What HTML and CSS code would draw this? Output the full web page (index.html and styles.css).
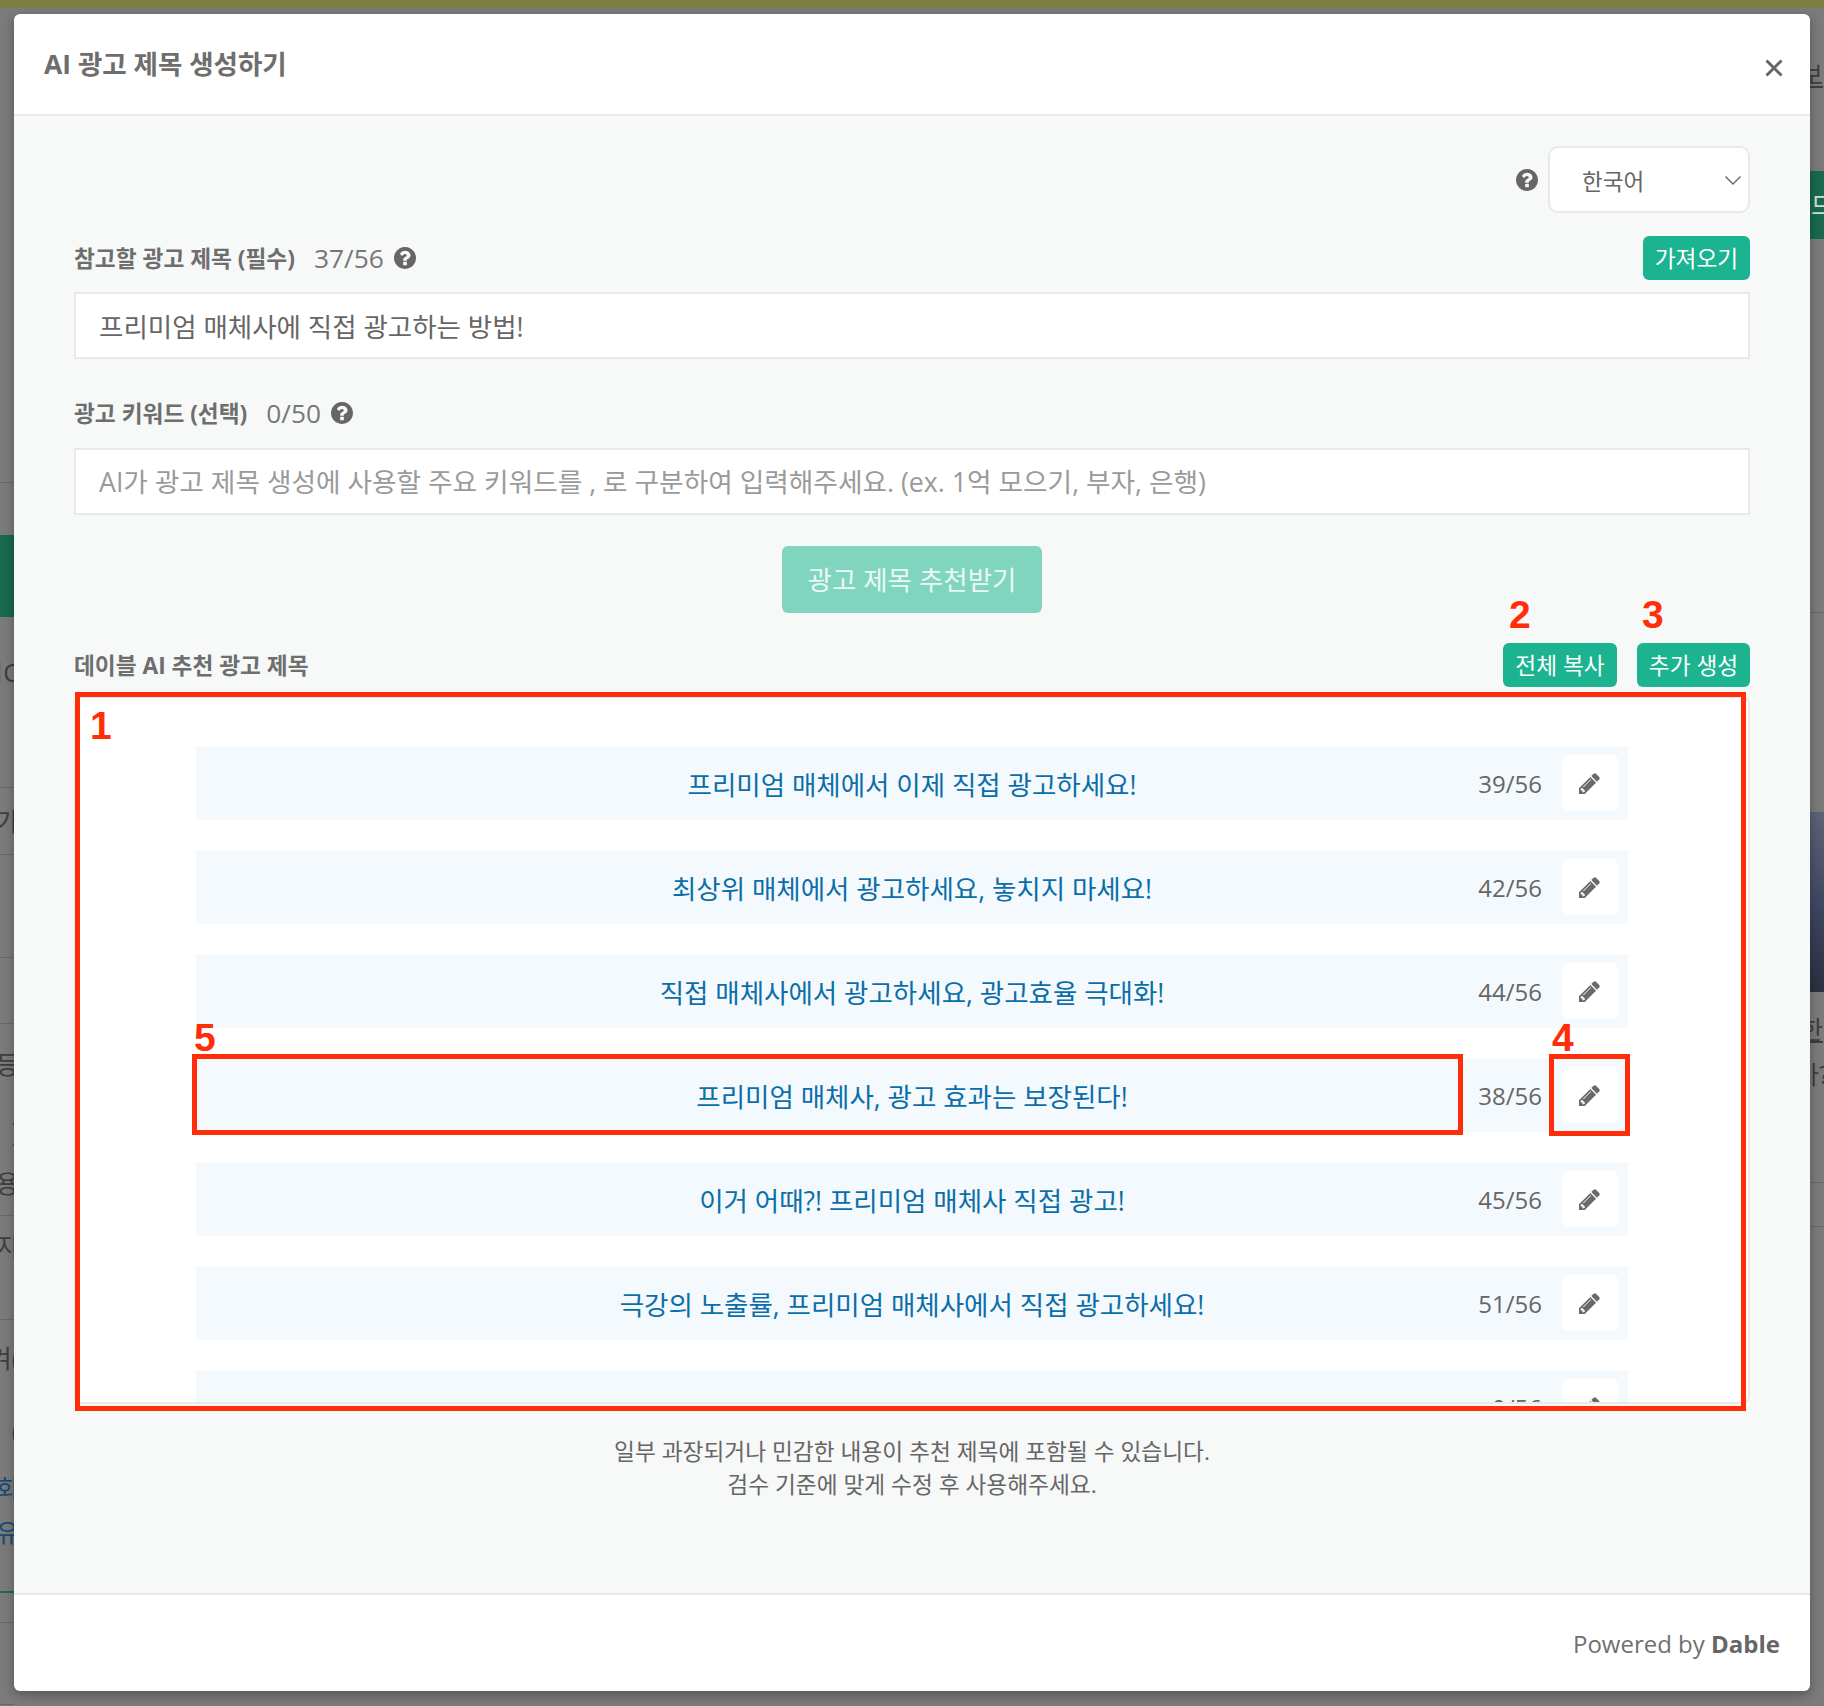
FILE: index.html
```html
<!DOCTYPE html>
<html lang="ko">
<head>
<meta charset="utf-8">
<title>AI 광고 제목 생성하기</title>
<link rel="stylesheet" href="styles.css">
</head>
<body>
<svg class="defs" aria-hidden="true">
  <symbol id="i-help" viewBox="128 128 1536 1536"><path d="M1024 1376v-192q0-14-9-23t-23-9h-192q-14 0-23 9t-9 23v192q0 14 9 23t23 9h192q14 0 23-9t9-23zm256-672q0-88-55.5-163t-138.5-116-170-41q-243 0-371 213-15 24 8 42l132 100q7 6 19 6 16 0 25-12 53-68 86-92 34-24 86-24 48 0 85.5 26t37.5 59q0 38-20 61t-68 45q-63 28-115.5 86.5t-52.5 125.5v36q0 14 9 23t23 9h192q14 0 23-9t9-23q0-19 21.5-49.5t54.5-49.5q32-18 49-28.5t46-35 44.5-48 28-60.5 12.5-81zm384 192q0 209-103 385.5t-279.5 279.5-385.5 103-385.5-103-279.5-279.5-103-385.5 103-385.5 279.5-279.5 385.5-103 385.5 103 279.5 279.5 103 385.5z"/></symbol>
  <symbol id="i-pencil" viewBox="128 128 1536 1536"><path d="M491 1536l91-91-235-235-91 91v107h128v128h107zm523-928q0-22-22-22-10 0-17 7l-542 542q-7 7-7 17 0 22 22 22 10 0 17-7l542-542q7-7 7-17zm-54-192l416 416-832 832h-416v-416zm683 96q0 53-37 90l-166 166-416-416 166-165q36-38 90-38 53 0 91 38l235 234q37 39 37 91z"/></symbol>
</svg>

<div class="topbar"></div>

<div class="behind" aria-hidden="true">
  <div class="strip strip-left">
    <div class="cell ruled"></div>
    <div class="cell"></div>
    <div class="cell green"></div>
    <div class="cell"><span class="frag">이C</span></div>
    <div class="cell ruled"></div>
    <div class="cell"><span class="frag">가</span></div>
    <div class="cell ruled"></div>
    <div class="cell ruled"></div>
    <div class="cell ruled"></div>
    <div class="cell"><span class="frag">등</span></div>
    <div class="cell"><span class="frag">)</span></div>
    <div class="cell"><span class="frag">용</span></div>
    <div class="cell ruled"></div>
    <div class="cell"><span class="frag">지</span></div>
    <div class="cell ruled"></div>
    <div class="cell"><span class="frag">겨(</span></div>
    <div class="cell"><span class="frag">(</span></div>
    <div class="cell"><span class="frag blue">회</span></div>
    <div class="cell"><span class="frag blue">유</span></div>
    <div class="cell greenline"></div>
    <div class="cell ruled"></div>
    <div class="cell ruled"></div>
    <div class="cell"></div>
  </div>
  <div class="strip strip-right">
    <div class="cell"><span class="frag under">보</span></div>
    <div class="cell"></div>
    <div class="cell green"><span class="frag light">므</span></div>
    <div class="cell ruled"></div>
    <div class="cell"></div>
    <div class="cell photo"></div>
    <div class="cell"><span class="frag under">한</span></div>
    <div class="cell"><span class="frag cut">아?</span></div>
    <div class="cell ruled"></div>
    <div class="cell ruled"><span class="frag">‹</span></div>
    <div class="cell"></div>
  </div>
</div>

<main class="modal">
  <header class="modal-head">
    <h1 class="modal-title">AI 광고 제목 생성하기</h1>
    <button class="close" type="button" aria-label="닫기">
      <svg viewBox="0 0 18 18"><path d="M1.5 1.5l15 15M16.5 1.5l-15 15"/></svg>
    </button>
  </header>

  <section class="modal-body">
    <div class="lang-row">
      <svg class="help"><use href="#i-help"/></svg>
      <div class="select">
        <span>한국어</span>
        <svg class="chev" viewBox="0 0 16 9"><path d="M.5.5L8 8 15.5.5"/></svg>
      </div>
    </div>

    <div class="label-row first">
      <div class="label">
        <strong>참고할 광고 제목 (필수)</strong>
        <span class="counter">37/56</span>
        <svg class="help"><use href="#i-help"/></svg>
      </div>
      <button class="btn btn-get" type="button">가져오기</button>
    </div>
    <div class="input">프리미엄 매체사에 직접 광고하는 방법!</div>

    <div class="label-row second">
      <div class="label">
        <strong>광고 키워드 (선택)</strong>
        <span class="counter">0/50</span>
        <svg class="help"><use href="#i-help"/></svg>
      </div>
    </div>
    <div class="input placeholder">AI가 광고 제목 생성에 사용할 주요 키워드를 , 로 구분하여 입력해주세요. (ex. 1억 모으기, 부자, 은행)</div>

    <div class="cta-row">
      <button class="cta" type="button">광고 제목 추천받기</button>
    </div>

    <div class="label-row results">
      <strong class="results-title">데이블 AI 추천 광고 제목</strong>
      <div class="actions">
        <button class="btn btn-copy" type="button">전체 복사</button>
        <button class="btn btn-more" type="button">추가 생성</button>
      </div>
    </div>

    <div class="list">
      <div class="row"><span class="row-text">프리미엄 매체에서 이제 직접 광고하세요!</span><div class="row-side"><span class="row-count">39/56</span><button class="edit" type="button" aria-label="수정"><svg><use href="#i-pencil"/></svg></button></div></div>
      <div class="row"><span class="row-text">최상위 매체에서 광고하세요, 놓치지 마세요!</span><div class="row-side"><span class="row-count">42/56</span><button class="edit" type="button" aria-label="수정"><svg><use href="#i-pencil"/></svg></button></div></div>
      <div class="row"><span class="row-text">직접 매체사에서 광고하세요, 광고효율 극대화!</span><div class="row-side"><span class="row-count">44/56</span><button class="edit" type="button" aria-label="수정"><svg><use href="#i-pencil"/></svg></button></div></div>
      <div class="row"><span class="row-text">프리미엄 매체사, 광고 효과는 보장된다!</span><div class="row-side"><span class="row-count">38/56</span><button class="edit" type="button" aria-label="수정"><svg><use href="#i-pencil"/></svg></button></div></div>
      <div class="row"><span class="row-text">이거 어때?! 프리미엄 매체사 직접 광고!</span><div class="row-side"><span class="row-count">45/56</span><button class="edit" type="button" aria-label="수정"><svg><use href="#i-pencil"/></svg></button></div></div>
      <div class="row"><span class="row-text">극강의 노출률, 프리미엄 매체사에서 직접 광고하세요!</span><div class="row-side"><span class="row-count">51/56</span><button class="edit" type="button" aria-label="수정"><svg><use href="#i-pencil"/></svg></button></div></div>
      <div class="row"><span class="row-text"></span><div class="row-side"><span class="row-count">0/56</span><button class="edit" type="button" aria-label="수정"><svg><use href="#i-pencil"/></svg></button></div></div>
    </div>

    <p class="hint">일부 과장되거나 민감한 내용이 추천 제목에 포함될 수 있습니다.<br>검수 기준에 맞게 수정 후 사용해주세요.</p>
  </section>

  <footer class="modal-foot">Powered by&nbsp;<b>Dable</b></footer>
</main>

<div class="marks" aria-hidden="true">
  <div class="box box-list"></div>
  <div class="box box-title"></div>
  <div class="box box-edit"></div>
  <span class="num num-1">1</span>
  <span class="num num-2">2</span>
  <span class="num num-3">3</span>
  <span class="num num-4">4</span>
  <span class="num num-5">5</span>
</div>
</body>
</html>
```

FILE: styles.css
```css
* { box-sizing: border-box; }
html, body { margin: 0; padding: 0; }
body {
  position: relative;
  width: 1824px;
  height: 1706px;
  overflow: hidden;
  background: #7b7b7b;
  font-family: "Open Sans", "Noto Sans CJK KR", sans-serif;
  color: #666;
}
.defs { position: absolute; width: 0; height: 0; }
button { font: inherit; border: 0; padding: 0; cursor: pointer; }

.topbar { height: 8px; background: #807f43; }

/* page dimmed behind the dialog */
.behind {
  position: absolute;
  inset: 8px 0 0 0;
  display: flex;
  justify-content: space-between;
}
.strip { width: 14px; display: grid; overflow: hidden; font-size: 25px; color: #3f3f3f; }
.strip-left {
  grid-template-rows: 475px 52px 82px 76px 95px 54px 13px 103px 66px 61px 67px 52px 12px 51px 53px 59px 73px 57px 44px 40px 30px 82px 1fr;
}
.strip-right {
  grid-template-rows: 87px 76px 68px 374px 199px 180px 58px 45px 88px 44px 1fr;
}
.cell { overflow: hidden; display: flex; align-items: flex-end; padding-bottom: 8px; min-height: 0; }
.strip-left .cell { justify-content: flex-end; }
.strip-left .frag { margin-right: -5px; }
.strip-right .frag { margin-left: -10px; }
.strip-right .cut { margin-left: -14px; }
.ruled { border-bottom: 1px solid #676767; }
.cell.green { background: #19694f; align-items: center; padding-bottom: 0; }
.greenline { border-bottom: 2px solid #1f6b50; }
.photo { background: linear-gradient(180deg, #5d6478 0%, #3e4560 55%, #2c3040 100%); }
.frag { flex: none; line-height: 1; }
.blue { color: #1c4b73; }
.strip-right .light { color: #cfe0da; margin-left: 1px; }
.under { text-decoration: underline; }

/* dialog */
.modal {
  position: relative;
  width: 1796px;
  height: 1677px;
  margin: 6px 14px 0;
  display: flex;
  flex-direction: column;
  background: #fff;
  border-radius: 6px;
  overflow: hidden;
  box-shadow: 0 4px 12px rgba(0, 0, 0, .3);
}
.modal-head {
  flex: none;
  height: 102px;
  padding: 0 25px 0 30px;
  display: flex;
  align-items: center;
  justify-content: space-between;
  border-bottom: 2px solid #e8e9e9;
}
.modal-title { margin: 0; padding-bottom: 3px; font-size: 26.5px; font-weight: 700; color: #6e6e6e; }
.close { width: 20px; height: 20px; background: none; margin-top: 8px; }
.close svg { display: block; width: 18px; height: 18px; fill: none; stroke: #666; stroke-width: 3; }

.modal-body {
  flex: 1;
  padding: 30px 60px 0;
  background: #f7f8f8;
  min-height: 0;
}
.lang-row { display: flex; justify-content: flex-end; align-items: center; gap: 10px; }
.help { display: block; flex: none; width: 22px; height: 22px; fill: #666; }
.select {
  width: 202px;
  height: 67px;
  padding: 1px 7px 0 32px;
  display: flex;
  align-items: center;
  justify-content: space-between;
  background: #fff;
  border: 2px solid #e8e9e9;
  border-radius: 10px;
  font-size: 22.5px;
}
.chev { width: 16px; height: 9px; fill: none; stroke: #666; stroke-width: 1.4; }

.label-row { display: flex; justify-content: space-between; align-items: center; height: 44px; }
.label-row.first { margin-top: 23px; }
.label-row.second { margin-top: 32px; }
.label-row.results { margin-top: 30px; }
.label { display: flex; align-items: center; padding-bottom: 1px; }
.label strong, .results-title { font-size: 22.7px; font-weight: 700; color: #6e6e6e; }
.results-title { padding-bottom: 1px; }
.counter { margin: 0 10px 0 19px; font-size: 26.3px; color: #777; }

.input {
  height: 67px;
  margin-top: 12px;
  padding: 0 23px;
  display: flex;
  align-items: center;
  background: #fff;
  border: 2px solid #e8e9e9;
  font-size: 26.5px;
  color: #666;
}
.label-row.second + .input { margin-top: 13px; }
.placeholder { color: #9a9a9a; font-size: 26.7px; padding-bottom: 2px; }

.btn {
  height: 44px;
  padding-bottom: 2px;
  border-radius: 6px;
  background: #1cb391;
  color: #fff;
  font-size: 22.7px;
}
.btn-get { width: 107px; }
.btn-copy { width: 114px; }
.btn-more { width: 113px; }
.actions { display: flex; gap: 20px; }

.cta-row { display: flex; justify-content: center; margin-top: 31px; }
.cta {
  width: 260px;
  height: 67px;
  padding-bottom: 2px;
  border-radius: 6px;
  background: #7fd5bd;
  color: #ecf8f4;
  font-size: 26.5px;
}

.list {
  height: 708px;
  margin-top: 9px;
  padding: 48px 120px 0 120px;
  overflow: hidden;
  background: #fff;
  border: 2px solid #e8e9e9;
  border-radius: 8px;
}
.row {
  height: 74px;
  margin-bottom: 30px;
  display: grid;
  grid-template-columns: 1fr auto 1fr;
  grid-template-areas: ". text side";
  align-items: center;
  background: #f4f9fd;
}
.row-text { grid-area: text; font-size: 26.5px; color: #0b6ea9; white-space: nowrap; }
.row-side { grid-area: side; display: flex; justify-content: flex-end; align-items: center; gap: 20px; padding-right: 10px; }
.row-count { font-size: 24px; color: #666; }
.edit {
  width: 56px;
  height: 56px;
  display: flex;
  align-items: center;
  justify-content: center;
  background: #fff;
  border-radius: 6px;
}
.edit svg { display: block; width: 21px; height: 21px; fill: #6a6a6a; transform: translateX(-1px); }

.hint {
  margin: 31px 0 0;
  text-align: center;
  font-size: 22.7px;
  line-height: 33px;
  color: #666;
}

.modal-foot {
  flex: none;
  height: 98px;
  padding: 0 30px 0 0;
  display: flex;
  align-items: center;
  justify-content: flex-end;
  border-top: 2px solid #e8e9e9;
  font-size: 24px;
  color: #707070;
  white-space: pre;
}
.modal-foot b { font-weight: 700; color: #666; }

/* red annotations laid over the screenshot */
.marks { position: absolute; inset: 0; pointer-events: none; }
.box { position: absolute; border: 5px solid #ff2d0a; }
.box-list { left: 75px; top: 692px; width: 1671px; height: 719px; }
.box-title { left: 192px; top: 1054px; width: 1271px; height: 81px; }
.box-edit { left: 1549px; top: 1054px; width: 81px; height: 82px; }
.num {
  position: absolute;
  font-family: "Liberation Sans", Arial, sans-serif;
  font-weight: 700;
  font-size: 39px;
  line-height: 1;
  color: #ff2d0a;
}
.num-1 { left: 90px; top: 706px; }
.num-2 { left: 1509px; top: 595px; }
.num-3 { left: 1642px; top: 595px; }
.num-4 { left: 1552px; top: 1018px; }
.num-5 { left: 194px; top: 1018px; }
```
